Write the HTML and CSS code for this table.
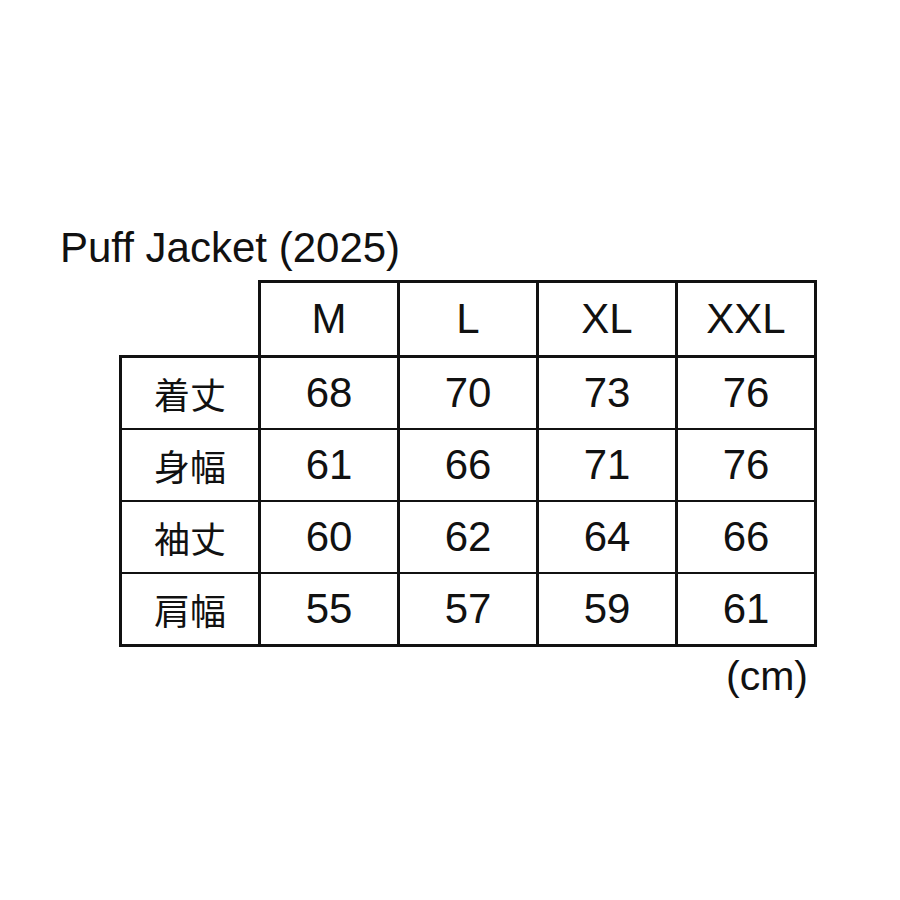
FILE: index.html
```html
<!DOCTYPE html>
<html lang="ja">
<head>
<meta charset="utf-8">
<title>Puff Jacket (2025)</title>
<link rel="stylesheet" href="styles.css">
</head>
<body>
<div class="sheet">
  <h1 class="title">Puff Jacket (2025)</h1>
  <table class="size-table">
    <colgroup>
      <col class="c"><col class="c"><col class="c"><col class="c"><col class="c">
    </colgroup>
    <thead>
      <tr class="head">
        <th class="blank"></th>
        <th>M</th>
        <th>L</th>
        <th>XL</th>
        <th>XXL</th>
      </tr>
    </thead>
    <tbody>
      <tr><th class="label">着丈</th><td>68</td><td>70</td><td>73</td><td>76</td></tr>
      <tr><th class="label">身幅</th><td>61</td><td>66</td><td>71</td><td>76</td></tr>
      <tr><th class="label">袖丈</th><td>60</td><td>62</td><td>64</td><td>66</td></tr>
      <tr><th class="label">肩幅</th><td>55</td><td>57</td><td>59</td><td>61</td></tr>
    </tbody>
  </table>
  <div class="unit">(cm)</div>
</div>
</body>
</html>
```

FILE: styles.css
```css
html, body {
  margin: 0;
  padding: 0;
  background: #ffffff;
}

body {
  width: 900px;
  height: 900px;
  color: #111111;
  font-family: "Liberation Sans", Arial, "Noto Sans CJK JP", sans-serif;
}

.sheet {
  padding-top: 224px;
}

.title {
  margin: 0 0 8px 60px;
  font-size: 42px;
  line-height: 48px;
  font-weight: normal;
}

.size-table {
  margin-left: 119px;
  border-collapse: collapse;
  table-layout: fixed;
  width: 698px;
}

.size-table .c {
  width: 139px;
}

.size-table th,
.size-table td {
  border: 3px solid #111111;
  padding: 0;
  text-align: center;
  vertical-align: middle;
  font-weight: normal;
  font-size: 42px;
  height: 70px;
  line-height: 1;
}

.size-table tbody td,
.size-table tbody th {
  border-top-width: 2px;
  border-bottom-width: 2px;
}

.size-table tbody tr:last-child td,
.size-table tbody tr:last-child th {
  border-bottom-width: 3px;
}

.size-table .head th {
  height: 72px;
}

.size-table .blank {
  border-top: hidden;
  border-left: hidden;
}

.size-table .label {
  font-family: "Noto Sans CJK JP", sans-serif;
  font-size: 36px;
}

.unit {
  width: 816px;
  margin-top: 6px;
  text-align: right;
  box-sizing: border-box;
  padding-right: 8px;
  font-size: 41px;
  line-height: 46px;
}
```
